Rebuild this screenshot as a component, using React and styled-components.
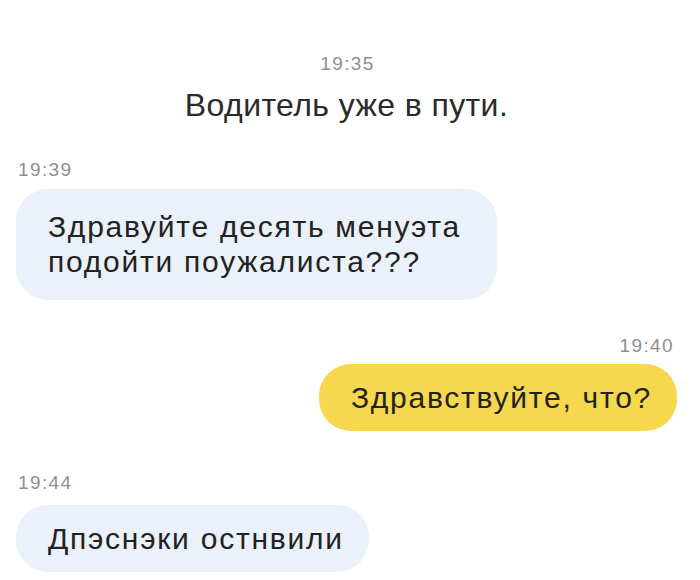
import React from "react";
import styled, { createGlobalStyle } from "styled-components";

const GlobalStyle = createGlobalStyle`
  body {
    margin: 0;
    background: #ffffff;
    font-family: "Liberation Sans", Arial, sans-serif;
    color: #222222;
  }
`;

const Feed = styled.div`
  display: flex;
  flex-direction: column;
  width: 700px;
  height: 580px;
  box-sizing: border-box;
  padding: 53px 23px 0 16px;
  overflow: hidden;
`;

const Group = styled.div`
  display: flex;
  flex-direction: column;
  align-items: ${(p) => p.$align || "flex-start"};
  margin-top: ${(p) => p.$top || 0}px;
`;

const Time = styled.div`
  font-size: 19px;
  line-height: 22px;
  letter-spacing: 1.4px;
  color: #8f8f8f;
  padding: ${(p) => (p.$side === "right" ? "0 3px 0 0" : "0 0 0 2px")};
  margin-bottom: ${(p) => p.$gap || 0}px;
`;

const Notice = styled.div`
  font-size: 32px;
  line-height: 38px;
  color: #2a2a2a;
  letter-spacing: 0.4px;
  margin-top: 11px;
`;

const Bubble = styled.div`
  box-sizing: border-box;
  max-width: 481px;
  padding: ${(p) => (p.$multi ? "20px 25px 21px 32px" : "16px 25px 16px 32px")};
  border-radius: 32px;
  background: ${(p) => (p.$mine ? "#f6d74d" : "#ebf1fa")};
  font-size: 30px;
  line-height: 35px;
  color: #222222;
  letter-spacing: 1.75px;
`;

export default function App() {
  return (
    <>
      <GlobalStyle />
      <Feed>
        <Group $align="center">
          <Time>19:35</Time>
          <Notice>Водитель уже в пути.</Notice>
        </Group>

        <Group $top={35}>
          <Time $gap={8}>19:39</Time>
          <Bubble $multi>Здравуйте десять менуэта подойти поужалиста???</Bubble>
        </Group>

        <Group $align="flex-end" $top={35}>
          <Time $side="right" $gap={7}>19:40</Time>
          <Bubble $mine>Здравствуйте, что?</Bubble>
        </Group>

        <Group $top={41}>
          <Time $gap={11}>19:44</Time>
          <Bubble>Дпэснэки остнвили</Bubble>
        </Group>
      </Feed>
    </>
  );
}
